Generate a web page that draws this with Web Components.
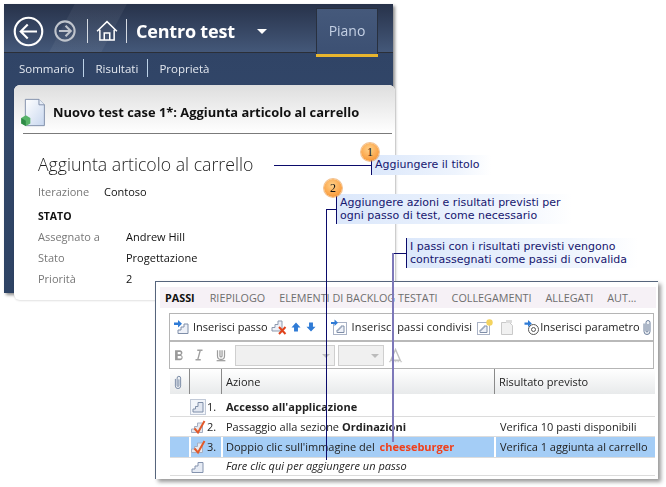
<!DOCTYPE html>
<html lang="it">
<head>
<meta charset="utf-8">
<title>Centro test</title>
<style>
  html, body { margin: 0; padding: 0; background: #fff; }
  body { width: 666px; height: 487px; overflow: hidden; position: relative; font-family: "Open Sans", "Noto Sans", sans-serif; }
</style>
</head>
<body>
<app-window></app-window>
<steps-panel></steps-panel>

<leader-line style="left:274px;top:165px;width:97px;height:1px"></leader-line>
<callout-note style="left:371px;top:155px;width:120px;height:20px"><div>Aggiungere il titolo</div></callout-note>
<callout-badge style="left:361px;top:143px">1</callout-badge>

<leader-line style="left:326px;top:209px;width:10px;height:1px"></leader-line>
<leader-line style="left:326px;top:209px;width:1px;height:251px"></leader-line>
<callout-note style="left:336px;top:194px;width:236px;height:30px"><div>Aggiungere azioni e risultati previsti per</div><div>ogni passo di test, come necessario</div></callout-note>
<callout-badge style="left:324px;top:179px">2</callout-badge>

<leader-line style="left:392px;top:253px;width:14px;height:1px"></leader-line>
<leader-line style="left:392px;top:253px;width:2px;height:189px;background:#7d78b9"></leader-line>
<callout-note style="left:406px;top:238px;width:232px;height:30px"><div>I passi con i risultati previsti vengono</div><div>contrassegnati come passi di convalida</div></callout-note>

<script>
// shared icons, all drawn on a 16 box
const ICONS = {
  back: '<circle cx="8" cy="8" r="7.1" fill="none" stroke="#fff" stroke-width="1.1"/><path d="M12.4 8H4.2M7.6 4.4 4 8l3.6 3.6" fill="none" stroke="#fff" stroke-width="1.1"/>',
  forward: '<circle cx="8" cy="8" r="7" fill="none" stroke="#bfc4cc" stroke-width="1.5"/><path d="M3.6 8h8.4M8.4 4.2 12.2 8l-3.8 3.8" fill="none" stroke="#bfc4cc" stroke-width="1.5"/>',
  home: '<path d="M.8 8.2 8 1.2l7.2 7M2.8 7v7.6h10.4V7M6 14.6V9.4h4v5.2" fill="none" stroke="#fff" stroke-width="1.1"/>',
  clip: '<path d="M5 4.5v8a3 3 0 0 0 6 0V3.5a2 2 0 0 0-4 0V12a1 1 0 0 0 2 0V5" fill="#eef1f5" stroke="#6d7f9b" stroke-width="1"/>',
  insert: '<path d="M5 14.5V11h3V8h3V5h4v9.5z" fill="#eef1f8" stroke="#7f8ea8"/><path d="M1 3.5h4V1l4 3.8-4 3.7V6H1z" fill="#2f7bd6"/>',
  removeStep: '<path d="M1 12V8.5h3v-3h3V2h4v10z" fill="#eef1f8" stroke="#8d99ae"/><path d="m8 8 6.5 7M14.5 8 8 15" stroke="#e0431c" stroke-width="2" fill="none"/>',
  up: '<path d="M8 2 14 8.5h-3.4V14H5.4V8.500H2z" fill="#2f7bd6"/>',
  down: '<path d="M8 14 2 7.500h3.400V2h5.200v5.500H14z" fill="#2f7bd6"/>',
  shared: '<rect x="2.500" y="3.500" width="13" height="12" fill="none" stroke="#53648a" stroke-dasharray="1 1"/><path d="M6 13.500V11h2V9h2V7h3v6.500z" fill="#eef1f8" stroke="#7f8ea8"/><path d="M0 3h3.500V.5L7 3.800 3.500 7V5H0z" fill="#2f7bd6"/>',
  newShared: '<rect x=".5" y="3.500" width="12" height="12" fill="none" stroke="#53648a" stroke-dasharray="1 1"/><path d="M3 13.500V11h2V9h2V7h3v6.500z" fill="#eef1f8" stroke="#7f8ea8"/><circle cx="12.500" cy="3.500" r="3.200" fill="#f4d35e"/>',
  paste: '<path d="M2.500 3.500h8l3 3v9h-11z" fill="#f1f1f1" stroke="#c9c9c9"/><rect x="7" y="1" width="6" height="3" fill="#ddd"/>',
  param: '<circle cx="9.500" cy="10.500" r="5" fill="#fff" stroke="#555"/><circle cx="9.500" cy="10.500" r="2" fill="none" stroke="#555"/><path d="M.5 3.500H4V1l3.800 3.500L4 8V5.700H.5z" fill="#2f7bd6"/>',
  bold: '<path d="M3.500 2.500h6a3 3 0 0 1 1 5.500 3.200 3.200 0 0 1-1 6h-6zM6.500 4.500v2.500h2.500a1.200 1.200 0 0 0 0-2.500zM6.500 9v3h3a1.500 1.500 0 0 0 0-3z" fill="#9a9a9a" fill-rule="evenodd"/>',
  italic: '<path d="M6 2.500h6M4 13.500h6M9.500 2.500 6.500 13.500" stroke="#a0a0a0" stroke-width="1.600" fill="none"/>',
  under: '<path d="M4 2.500v6.500a4 4 0 0 0 8 0V2.500M6.800 2.500v6.500a1.200 1.200 0 0 0 2.400 0V2.500" stroke="#9c9c9c" fill="none" stroke-width="1.400"/><path d="M3 14.500h10" stroke="#9c9c9c" stroke-width="1.400"/>',
  fontA: '<path d="M8 1.500 3 13h10z" fill="none" stroke="#c2c2c2" stroke-width="1.500"/><path d="M1 14.500h14" stroke="#d2d2d2" stroke-dasharray="2 1" stroke-width="1.500"/>',
  step: '<path d="M2 14.500V11h3V8h3V4.500h5v10z" fill="#e6ebf4" stroke="#8493ae"/>',
  sharedStep: '<rect x=".5" y=".5" width="15" height="15" fill="#f2f5fa" stroke="#8b98b3" stroke-dasharray="1 1"/><path d="M3 13V10h2.500V7.500H8V3.500h5V13z" fill="#e2e7f1" stroke="#7f8ea8"/>',
  checkStep: '<path d="M1.500 13.500V10h3V7.500h3V4h5v9.500z" fill="#e6e9f0" stroke="#a5afc2"/><path d="m4.500 9.500 3.500 4L14.500 2" fill="none" stroke="#e25a2b" stroke-width="2"/>'
};

class IconGlyph extends HTMLElement {
  connectedCallback() {
    const size = this.getAttribute('size') || 16;
    const shadow = this.attachShadow({ mode: 'open' });
    shadow.innerHTML = `
      <style>:host { display: inline-flex; flex: none; } svg { display: block; }</style>
      <svg width="${size}" height="${size}" viewBox="0 0 16 16">${ICONS[this.getAttribute('name')] || ''}</svg>`;
  }
}

class AppWindow extends HTMLElement {
  connectedCallback() {
    const shadow = this.attachShadow({ mode: 'open' });
    shadow.innerHTML = `
      <style>
        :host {
          position: absolute; left: 4px; top: 4px; width: 389px; height: 289px;
          display: flex; flex-direction: column; color: #fff;
          background: linear-gradient(#2f4264, #324769 120px, #2e4364);
          box-shadow: 2px 2px 3px rgba(0,0,0,.45);
          filter: blur(.3px);
        }
        .top {
          height: 49px; box-sizing: border-box; border-bottom: 1px solid #2b2f38;
          display: flex; align-items: center; padding: 6px 0 0 9px; position: relative;
          background:
            linear-gradient(118deg, rgba(255,255,255,0) 0 62px, rgba(255,255,255,.05) 63px 108px, rgba(255,255,255,0) 109px),
            linear-gradient(#27324a, #445879);
        }
        .sep { width: 1px; height: 24px; background: #d5dae2; }
        .brand { font: 700 18px/26px "Open Sans", sans-serif; margin-left: 9px; letter-spacing: -.2px; }
        .caret { width: 0; height: 0; border: 5px solid transparent; border-top: 5px solid #fff; border-bottom: 0; margin-left: 22px; }
        .tab {
          position: absolute; left: 312px; top: 4px; width: 62px; height: 46px; box-sizing: border-box;
          background: linear-gradient(#45597b, #3c5073); border: 1px solid #28303f; border-bottom: 0;
          color: #c4d0e4; font: 14px/43px "Open Sans", sans-serif; text-align: center;
          box-shadow: 0 3px 0 #e8b52e; border-radius: 1px 1px 0 0;
        }
        .sub {
          height: 32px; box-sizing: border-box; padding: 0 0 2px 15px; display: flex; align-items: center;
          font: 11.500px/17px "Open Sans", sans-serif; color: #e3e8f0;
        }
        .sub span { display: block; }
        .sub i { width: 1px; height: 18px; background: #bcd2e8; margin: 0 11px 0 9px; }
        test-card { flex: 1; }
      </style>
      <div class="top">
        <icon-glyph name="back" size="31"></icon-glyph>
        <icon-glyph name="forward" size="22" style="margin-left:10px"></icon-glyph>
        <div class="sep" style="margin-left:11px"></div>
        <icon-glyph name="home" size="22" style="margin-left:8px"></icon-glyph>
        <div class="sep" style="margin-left:8px"></div>
        <div class="brand">Centro test</div>
        <div class="caret"></div>
        <div class="tab">Piano</div>
      </div>
      <div class="sub"><span>Sommario</span><i></i><span>Risultati</span><i></i><span>Proprietà</span></div>
      <test-card></test-card>`;
  }
}

class TestCard extends HTMLElement {
  connectedCallback() {
    const shadow = this.attachShadow({ mode: 'open' });
    shadow.innerHTML = `
      <style>
        :host {
          display: block; margin: 0 -2px -7px 10px; background: #fff; color: #111;
          border-radius: 6px 6px 0 6px; position: relative;
          box-shadow: 0 1px 2px rgba(0,0,0,.12);
        }
        .head {
          height: 48px; box-sizing: border-box; padding: 6px 0 0 6px;
          display: flex; align-items: center; gap: 6px;
          background: linear-gradient(#dedede, #fff);
          border-radius: 6px 6px 0 0;
          font: 700 12.900px/18px "Open Sans", sans-serif;
        }
        .rule { height: 1px; background: #7a7a7a; margin: 0 3px 0 9px; }
        .doc { flex: none; }
        h1 { font: 300 17.700px/24px "Open Sans", sans-serif; margin: 18px 0 0 24px; color: #222; }
        .body { padding-left: 24px; font: 11px/21px "Open Sans", sans-serif; }
        .iter { margin-top: 5px; }
        .label { font-weight: 700; margin: 5px 0 0; line-height: 19px; font-size: 10.500px; color: #111; }
      </style>
      <div class="head">
        <svg class="doc" width="27" height="29" viewBox="0 0 29 32">
          <defs><linearGradient id="p" x1="0" y1="0" x2="1" y2="1"><stop offset="0" stop-color="#fff"/><stop offset="1" stop-color="#c8d7ef"/></linearGradient></defs>
          <path d="M5.500 1.500h15l6 6v23h-21z" fill="url(#p)" stroke="#7b8aa6"/>
          <path d="M20.500 1.500v6h6" fill="#e6ecf6" stroke="#7b8aa6"/>
          <path d="M6 19l5 3v6l-5 3-5-3v-6z" fill="#57b368"/>
          <path d="M6 25v6l-5-3v-6z" fill="#2e8a45"/>
        </svg>
        <span>Nuovo test case 1*: Aggiunta articolo al carrello</span>
      </div>
      <div class="rule"></div>
      <h1>Aggiunta articolo al carrello</h1>
      <div class="body">
        <field-row class="iter" width="66">Iterazione<span slot="value">Contoso</span></field-row>
        <div class="label">STATO</div>
        <field-row width="88">Assegnato a<span slot="value">Andrew Hill</span></field-row>
        <field-row width="88">Stato<span slot="value">Progettazione</span></field-row>
        <field-row width="88">Priorità<span slot="value">2</span></field-row>
      </div>`;
  }
}

class FieldRow extends HTMLElement {
  connectedCallback() {
    const shadow = this.attachShadow({ mode: 'open' });
    shadow.innerHTML = `
      <style>
        :host { display: flex; height: 21px; }
        .k { color: #777; width: ${this.getAttribute('width')}px; flex: none; }
        .v { color: #111; }
      </style>
      <div class="k"><slot></slot></div>
      <div class="v"><slot name="value"></slot></div>`;
  }
}

class StepsPanel extends HTMLElement {
  connectedCallback() {
    const shadow = this.attachShadow({ mode: 'open' });
    shadow.innerHTML = `
      <style>
        :host {
          position: absolute; left: 155px; top: 281px; width: 503px; height: 198px; box-sizing: border-box;
          background: #fff; border: 1px solid #56657c; border-width: 1px 0 0 1px;
          box-shadow: 3px 3px 4px rgba(0,0,0,.4);
          padding: 5px 4px 0 4px; font: 11px/16px "Open Sans", sans-serif; color: #222;
          display: flex; flex-direction: column;
          filter: blur(.3px);
        }
        .tabs {
          height: 21px; background: #f6f1f6; display: flex; align-items: center; gap: 14px; padding-left: 5px;
          font-size: 10.800px; color: #6e6e6e; margin-right: -2px;
        }
        .tabs b { color: #111; margin-right: 1px; }
        .box { margin: 5px 0 0 9px; border: 1px solid #b5b5b5; }
        .bar { height: 26px; display: flex; align-items: center; white-space: nowrap; }
        .bar + .bar { border-top: 2px solid #b9b9b9; height: 26px; }
        .sep { width: 1px; height: 20px; background: #777; }
        .sel { height: 19px; background: #f0f0f0; border: 1px solid #cfcfcf; position: relative; }
        .sel::after {
          content: ""; position: absolute; right: 4px; top: 8px; width: 0; height: 0;
          border: 4px solid transparent; border-top-color: #bbb; border-bottom: 0;
        }
        .head {
          height: 25px; margin: 0 -1px 0 10px; background: linear-gradient(#fff, #e8eaeb);
          display: grid; grid-template-columns: 19px 32px 1fr 161px; align-items: center;
        }
        .head div { height: 100%; display: flex; align-items: center; padding-left: 5px; }
        .head div + div { box-shadow: inset 1px 0 0 #8a8a8a; }
        .rows { margin: 0 -1px 0 10px; }
      </style>
      <div class="tabs"><b>PASSI</b><span>RIEPILOGO</span><span>ELEMENTI DI BACKLOG TESTATI</span><span>COLLEGAMENTI</span><span>ALLEGATI</span><span>AUT...</span></div>
      <div class="box">
        <div class="bar">
          <icon-glyph name="insert" style="margin-left:3px"></icon-glyph>
          <span style="margin-left:4px">Inserisci passo</span>
          <icon-glyph name="removeStep" style="margin-left:3px"></icon-glyph>
          <icon-glyph name="up" size="12" style="margin-left:3px"></icon-glyph>
          <icon-glyph name="down" size="12" style="margin-left:3px"></icon-glyph>
          <div class="sep" style="margin-left:3px"></div>
          <icon-glyph name="shared" style="margin-left:11px"></icon-glyph>
          <span style="margin-left:5px;letter-spacing:.1px">Inserisci passi condivisi</span>
          <icon-glyph name="newShared" style="margin-left:5px"></icon-glyph>
          <icon-glyph name="paste" style="margin-left:6px"></icon-glyph>
          <div class="sep" style="margin-left:2px"></div>
          <icon-glyph name="param" style="margin-left:7px"></icon-glyph>
          <span style="margin-left:0">Inserisci parametro</span>
          <icon-glyph name="clip" style="margin-left:-1px"></icon-glyph>
        </div>
        <div class="bar">
          <icon-glyph name="bold" size="14" style="margin-left:2px"></icon-glyph>
          <icon-glyph name="italic" size="14" style="margin-left:6px"></icon-glyph>
          <icon-glyph name="under" size="14" style="margin-left:8px"></icon-glyph>
          <div class="sel" style="margin-left:7px;width:98px"></div>
          <div class="sel" style="margin-left:3px;width:44px"></div>
          <icon-glyph name="fontA" size="15" style="margin-left:4px"></icon-glyph>
        </div>
      </div>
      <div class="head">
        <div style="padding-left:1px"><icon-glyph name="clip" size="14"></icon-glyph></div><div></div><div>Azione</div><div>Risultato previsto</div>
      </div>
      <div class="rows">
        <step-row icon="sharedStep" num="1." style="height:23px;padding-top:4px"><b>Accesso all'applicazione</b></step-row>
        <step-row icon="checkStep" num="2." style="height:20px;padding-top:1px">Passaggio alla sezione <b>Ordinazioni</b><span slot="result">Verifica 10 pasti disponibili</span></step-row>
        <step-row icon="checkStep" num="3." selected style="height:21px">Doppio clic sull'immagine del <b style="color:#f0401c;margin-left:2px">cheeseburger</b><span slot="result">Verifica 1 aggiunta al carrello</span></step-row>
        <step-row icon="step" num="" style="height:18px;padding-bottom:2px"><i>Fare clic qui per aggiungere un passo</i></step-row>
      </div>`;
  }
}

class StepRow extends HTMLElement {
  connectedCallback() {
    const sel = this.hasAttribute('selected');
    const shadow = this.attachShadow({ mode: 'open' });
    shadow.innerHTML = `
      <style>
        :host {
          display: grid; grid-template-columns: 19px 32px 1fr 161px; box-sizing: border-box;
          border-bottom: 1px solid #dcdcdc; align-items: stretch;
        }
        .c { display: flex; align-items: center; ${sel ? 'background:#a4cdf6;' : ''} }
        .c + .c { ${sel ? 'box-shadow: inset 2px 0 0 #fff;' : ''} }
        .n { gap: 1px; padding-left: 1px; white-space: nowrap; }
        .t { padding-left: 5px; white-space: nowrap; }
        .t:last-child { padding-left: 6px; }
      </style>
      <div class="c"></div>
      <div class="c n"><icon-glyph name="${this.getAttribute('icon')}"></icon-glyph><span>${this.getAttribute('num')}</span></div>
      <div class="c t"><span><slot></slot></span></div>
      <div class="c t"><slot name="result"></slot></div>`;
  }
}

class CalloutNote extends HTMLElement {
  connectedCallback() {
    const shadow = this.attachShadow({ mode: 'open' });
    shadow.innerHTML = `
      <style>
        :host {
          position: absolute; box-sizing: border-box; border-left: 1px solid #0b0b6b;
          padding: 0 0 0 3px; display: flex; flex-direction: column; justify-content: center;
          background: linear-gradient(90deg, #dce8fb, #eef4fd 70%, rgba(255,255,255,0));
          font: 11px/13.500px "DejaVu Sans", Verdana, sans-serif; color: #16166f; white-space: nowrap;
        }
      </style>
      <slot></slot>`;
  }
}

class CalloutBadge extends HTMLElement {
  connectedCallback() {
    const shadow = this.attachShadow({ mode: 'open' });
    shadow.innerHTML = `
      <style>
        :host {
          position: absolute; width: 18px; height: 18px; border-radius: 50%;
          background: radial-gradient(circle at 45% 35%, #ffd18a, #fba54a 60%, #ee8420);
          box-shadow: 0 0 0 1px rgba(230,140,50,.55);
          font: 12px/18px "Liberation Serif", serif; color: #111; text-align: center;
        }
      </style>
      <slot></slot>`;
  }
}

class LeaderLine extends HTMLElement {
  connectedCallback() {
    const shadow = this.attachShadow({ mode: 'open' });
    shadow.innerHTML = `<style>:host { position: absolute; display: block; background: #0b0b6b; }</style>`;
  }
}

customElements.define('icon-glyph', IconGlyph);
customElements.define('field-row', FieldRow);
customElements.define('step-row', StepRow);
customElements.define('test-card', TestCard);
customElements.define('steps-panel', StepsPanel);
customElements.define('app-window', AppWindow);
customElements.define('callout-note', CalloutNote);
customElements.define('callout-badge', CalloutBadge);
customElements.define('leader-line', LeaderLine);
</script>
</body>
</html>
